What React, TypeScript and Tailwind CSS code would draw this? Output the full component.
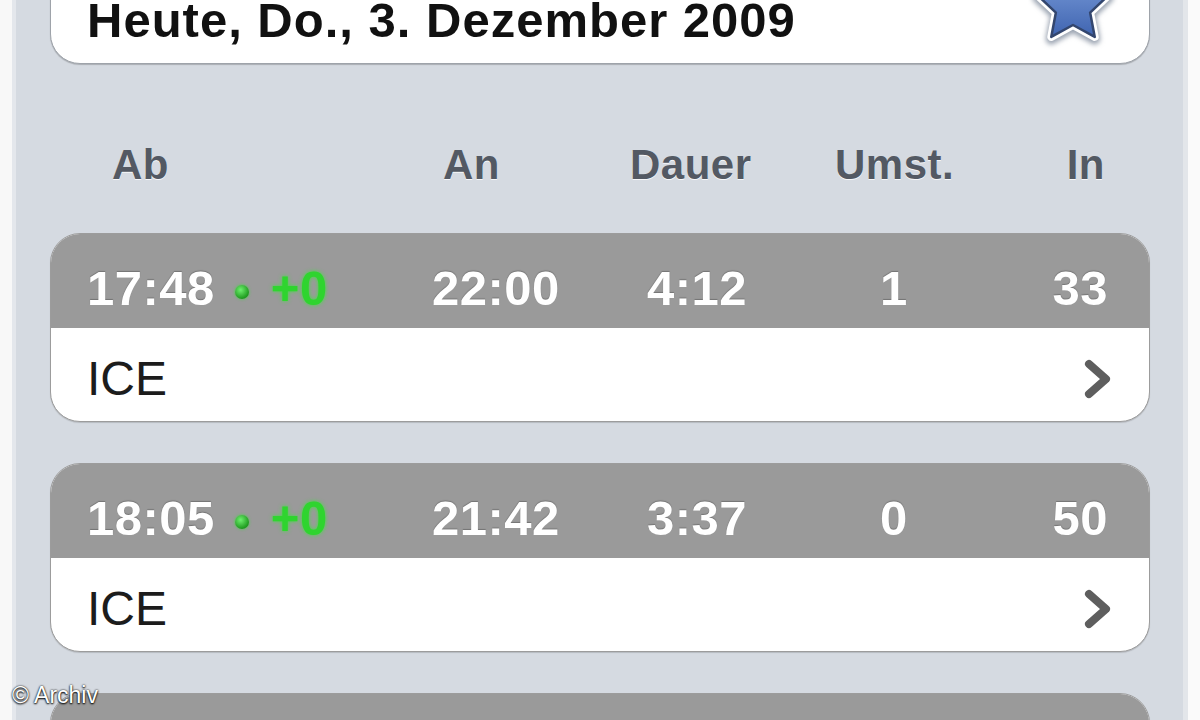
import React from "react";

type Connection = {
  dep: string;
  arr: string;
  dur: string;
  changes: string;
  load: string;
  train: string;
};

const CONNECTIONS: Connection[] = [
  { dep: "17:48", arr: "22:00", dur: "4:12", changes: "1", load: "33", train: "ICE" },
  { dep: "18:05", arr: "21:42", dur: "3:37", changes: "0", load: "50", train: "ICE" },
  { dep: "18:36", arr: "22:51", dur: "4:15", changes: "1", load: "27", train: "ICE" },
];

function FavStar() {
  // outer r=37, inner r=18, centre 45/45
  const d =
    "M45 8 L55.58 30.44 L80.19 33.57 L62.12 50.56 L66.75 74.93 L45 63 L23.25 74.93 L27.88 50.56 L9.81 33.57 L34.42 30.44 Z";
  return (
    <svg width="90" height="90" viewBox="0 0 90 90" className="shrink-0">
      <defs>
        <linearGradient id="starFill" x1="0" y1="0" x2="0" y2="1">
          <stop offset="0" stopColor="#7d9fdc" />
          <stop offset="1" stopColor="#3f64b0" />
        </linearGradient>
        <filter id="starGlow" x="-20%" y="-20%" width="140%" height="140%">
          <feGaussianBlur stdDeviation="2.5" />
        </filter>
      </defs>
      <path d={d} fill="none" stroke="#9aa3b0" strokeWidth="11" strokeLinejoin="round" filter="url(#starGlow)" transform="translate(0 2)" />
      <path d={d} fill="none" stroke="#ffffff" strokeWidth="8" strokeLinejoin="round" />
      <path d={d} fill="url(#starFill)" stroke="#33466e" strokeWidth="2.5" strokeLinejoin="round" />
    </svg>
  );
}

function Chevron() {
  return (
    <svg width="34" height="44" viewBox="0 0 34 44" className="shrink-0">
      <path d="M9 7 L26 22 L9 37" fill="none" stroke="#5e5e5e" strokeWidth="8" strokeLinecap="round" strokeLinejoin="round" />
    </svg>
  );
}

function ConnectionCard({ c }: { c: Connection }) {
  return (
    <div className="shrink-0 h-[189px] rounded-[30px] border border-[#9c9c9c] bg-white overflow-hidden shadow-[0_1px_1px_rgba(0,0,0,0.15)]">
      {/* times row */}
      <div className="h-[94px] bg-[#9a9a9a] pt-[30px] pl-[36px] pr-[41px] grid grid-cols-[345px_215px_233px_1fr_auto] text-[49px] font-bold leading-none tracking-[0.5px] text-white [text-shadow:0_-1px_1px_rgba(0,0,0,0.25)]">
        <div className="whitespace-nowrap">
          {c.dep}
          <span className="inline-block align-[6px] ml-[20px] mr-[22px] w-[14px] h-[14px] rounded-full bg-[radial-gradient(circle_at_40%_35%,#6ef06e,#1e9a1e_70%)] shadow-[0_0_3px_#3ddc3d]" />
          <span className="text-[#2fd42f] [text-shadow:0_0_4px_#3ee23e]">+0</span>
        </div>
        <div>{c.arr}</div>
        <div>{c.dur}</div>
        <div>{c.changes}</div>
        <div className="text-right">{c.load}</div>
      </div>
      {/* train row */}
      <div className="h-[95px] flex items-start justify-between pl-[36px] pr-[35px]">
        <span className="mt-[27px] text-[48px] leading-none text-[#1c1c1c]">{c.train}</span>
        <span className="mt-[29px]">
          <Chevron />
        </span>
      </div>
    </div>
  );
}

export default function App() {
  return (
    <div
      className="relative w-[1200px] h-[720px] overflow-hidden flex bg-white"
      style={{ fontFamily: '"Liberation Sans", Arial, Helvetica, sans-serif' }}
    >
      <div className="w-[12px] bg-[#f8f8f8]" />
      <div className="w-[4px] bg-[#e4e7ec]" />

      <main className="flex-1 bg-[#d5dae1] pl-[34px] pr-[33px] flex flex-col">
        {/* date selector */}
        <div className="shrink-0 -mt-[40px] h-[104px] rounded-[30px] bg-white border border-[#9ea3aa] shadow-[0_1px_1px_rgba(0,0,0,0.2)] flex items-start justify-between pl-[36px] pr-[31px]">
          <span className="mt-[35px] text-[49px] font-bold leading-none tracking-[1px] text-[#111]">
            Heute, Do., 3. Dezember 2009
          </span>
          <span className="mt-[1px]">
            <FavStar />
          </span>
        </div>

        {/* column labels */}
        <div className="shrink-0 h-[169px] pt-[80px] pl-[62px] pr-[45px] grid grid-cols-[331px_187px_205px_1fr_auto] text-[42px] font-bold leading-none tracking-[0.5px] text-[#535963] [text-shadow:0_1px_0_rgba(255,255,255,0.8)]">
          <div>Ab</div>
          <div>An</div>
          <div>Dauer</div>
          <div>Umst.</div>
          <div className="text-right">In</div>
        </div>

        <div className="flex flex-col gap-[41px]">
          {CONNECTIONS.map((c) => (
            <ConnectionCard key={c.dep} c={c} />
          ))}
        </div>
      </main>

      <div className="w-[5px] bg-[#e3e6ea]" />
      <div className="w-[12px] bg-[#fafafa]" />

      {/* photo credit */}
      <div className="absolute left-[12px] top-[684px] text-[23px] leading-none text-white [text-shadow:0_0_2px_#000,0_1px_2px_#000]">
        © Archiv
      </div>
    </div>
  );
}
